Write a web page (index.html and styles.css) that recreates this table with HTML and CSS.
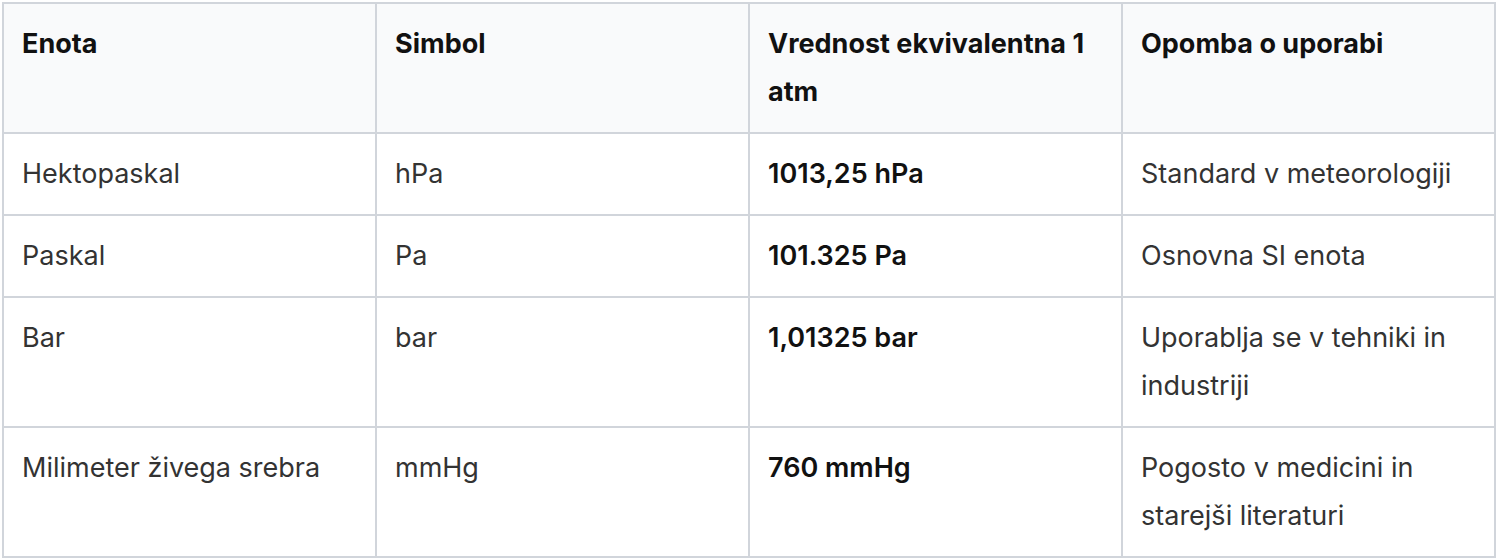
FILE: index.html
```html
<!DOCTYPE html>
<html lang="sl">
<head>
<meta charset="utf-8">
<title>Enote tlaka</title>
<link rel="stylesheet" href="styles.css">
</head>
<body>
<table class="units">
  <thead>
    <tr>
      <th>Enota</th>
      <th>Simbol</th>
      <th>Vrednost ekvivalentna 1 atm</th>
      <th>Opomba o uporabi</th>
    </tr>
  </thead>
  <tbody>
    <tr>
      <td>Hektopaskal</td>
      <td>hPa</td>
      <td class="val">1013,25 hPa</td>
      <td>Standard v meteorologiji</td>
    </tr>
    <tr>
      <td>Paskal</td>
      <td>Pa</td>
      <td class="val">101.325 Pa</td>
      <td>Osnovna SI enota</td>
    </tr>
    <tr>
      <td>Bar</td>
      <td>bar</td>
      <td class="val">1,01325 bar</td>
      <td>Uporablja se v tehniki in industriji</td>
    </tr>
    <tr>
      <td>Milimeter živega srebra</td>
      <td>mmHg</td>
      <td class="val">760 mmHg</td>
      <td>Pogosto v medicini in starejši literaturi</td>
    </tr>
  </tbody>
</table>
</body>
</html>
```
FILE: styles.css
```css
html, body {
  margin: 0;
  background: #ffffff;
}
body {
  padding: 2px;
  font-family: Inter, "Noto Sans", sans-serif;
  font-size: 27px;
  color: #333333;
}
.units {
  width: 1494px;
  border-collapse: collapse;
  table-layout: fixed;
  border: 2px solid #d1d5db;
}
.units th,
.units td {
  border: 2px solid #d1d5db;
  padding: 16px 18px;
  line-height: 48px;
  text-align: left;
  vertical-align: top;
}
.units th {
  background: #f9fafb;
  color: #111111;
  font-weight: 700;
}
.units td.val {
  color: #111111;
  font-weight: 600;
}
```
